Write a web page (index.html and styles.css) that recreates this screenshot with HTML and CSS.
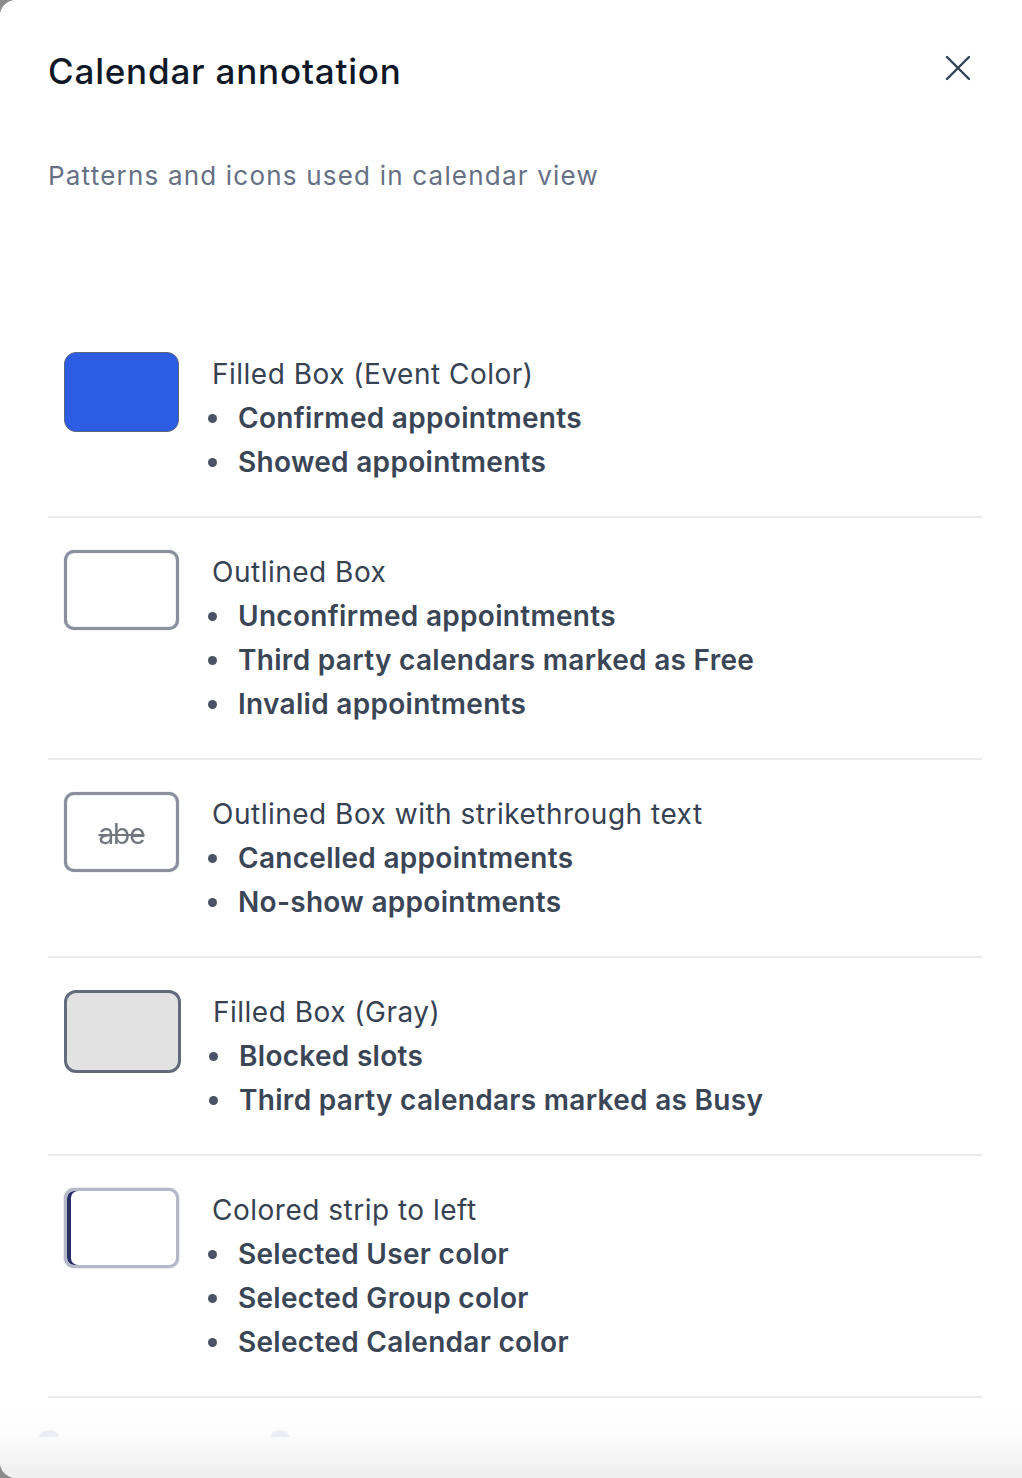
FILE: index.html
```html
<!DOCTYPE html>
<html lang="en">
<head>
<meta charset="utf-8">
<title>Calendar annotation</title>
<link rel="stylesheet" href="styles.css">
</head>
<body>
<div class="panel">
  <div class="scroll">
    <header class="header">
      <h1 class="title">Calendar annotation</h1>
      <button class="close" aria-label="Close">
        <svg width="26" height="26" viewBox="0 0 26 26" fill="none" stroke="#344054" stroke-width="2.4" stroke-linecap="round"><path d="M2 2L24 24M24 2L2 24"/></svg>
      </button>
    </header>
    <p class="subtitle">Patterns and icons used in calendar view</p>

    <div class="legend">
      <div class="row">
        <div class="swatch swatch-event"></div>
        <div class="info">
          <div class="label">Filled Box (Event Color)</div>
          <ul class="items">
            <li>Confirmed appointments</li>
            <li>Showed appointments</li>
          </ul>
        </div>
      </div>
      <div class="row">
        <div class="swatch swatch-outline"></div>
        <div class="info">
          <div class="label">Outlined Box</div>
          <ul class="items">
            <li>Unconfirmed appointments</li>
            <li>Third party calendars marked as Free</li>
            <li>Invalid appointments</li>
          </ul>
        </div>
      </div>
      <div class="row">
        <div class="swatch swatch-outline swatch-strike"><span>abe</span></div>
        <div class="info">
          <div class="label">Outlined Box with strikethrough text</div>
          <ul class="items">
            <li>Cancelled appointments</li>
            <li>No-show appointments</li>
          </ul>
        </div>
      </div>
      <div class="row">
        <div class="swatch swatch-gray"></div>
        <div class="info">
          <div class="label">Filled Box (Gray)</div>
          <ul class="items">
            <li>Blocked slots</li>
            <li>Third party calendars marked as Busy</li>
          </ul>
        </div>
      </div>
      <div class="row">
        <div class="swatch swatch-strip"></div>
        <div class="info">
          <div class="label">Colored strip to left</div>
          <ul class="items">
            <li>Selected User color</li>
            <li>Selected Group color</li>
            <li>Selected Calendar color</li>
          </ul>
        </div>
      </div>
      <div class="row row-icons">
        <div class="icon-dot"></div>
        <div class="icon-dot icon-dot-2"></div>
      </div>
    </div>
  </div>
  <div class="footer"></div>
</div>
</body>
</html>
```

FILE: styles.css
```css
* { box-sizing: border-box; }
html, body { margin: 0; padding: 0; }
body {
  background: #8c8c8c;
  font-family: Inter, "Noto Sans", "Liberation Sans", sans-serif;
  width: 1022px;
  height: 1478px;
  overflow: hidden;
}
.panel {
  height: 1478px;
  background: #fff;
  border-radius: 16px 0 0 16px;
  display: flex;
  flex-direction: column;
  overflow: hidden;
}
.scroll {
  flex: 1;
  overflow: hidden;
  padding: 0 40px 0 48px;
  background: linear-gradient(to bottom, #fff 0, #fff 1405px, #fcfcfc 1437px);
}
.header {
  padding-top: 48px;
  display: flex;
  justify-content: space-between;
  align-items: flex-start;
}
.title {
  margin: 0;
  font-size: 35px;
  line-height: 46px;
  font-weight: 500;
  color: #101828;
  letter-spacing: 0.8px;
}
.close {
  border: 0;
  background: none;
  padding: 0;
  margin: 7px 11px 0 0;
  width: 26px;
  height: 26px;
  cursor: pointer;
}
.close svg { display: block; }
.subtitle {
  margin: 64px 0 0 0;
  font-size: 26px;
  line-height: 36px;
  color: #667085;
  letter-spacing: 1.2px;
}
.legend {
  margin-top: 126px;
}
.row {
  display: flex;
  align-items: flex-start;
  padding: 32px 0 32px 16px;
  border-bottom: 2px solid #eaebef;
}
.swatch {
  flex: none;
  width: 115px;
  height: 80px;
  border-radius: 12px;
  margin-right: 33px;
}
.swatch-event {
  background: #2c5ce4;
  border: 1.5px solid #5d6679;
}
.swatch-outline {
  background: #fff;
  border: 3px solid #8a8f9d;
  border-radius: 10px;
  box-shadow: 0 0 1px #8a8f9d, inset 0 0 1px #8a8f9d;
}
.swatch-strike {
  display: flex;
  align-items: center;
  justify-content: center;
}
.swatch-strike span {
  font-size: 28px;
  line-height: 1;
  margin-top: 4px;
  color: #71767f;
  text-decoration: line-through;
  text-decoration-thickness: 2px;
  filter: blur(0.7px);
  letter-spacing: -1px;
}
.swatch-gray {
  width: 117px;
  height: 83px;
  margin-right: 32px;
  background: #e2e2e2;
  border: 3px solid #636a7c;
  border-radius: 12px;
}
.swatch-strip {
  background: #fff;
  border: 3px solid #b4b8c7;
  border-radius: 10px;
  box-shadow: inset 4px 0 0 #2a2f66, 0 0 1.5px #9aa0b3;
  filter: blur(0.5px);
}
.info {
  color: #364152;
}
.label {
  font-size: 28px;
  line-height: 44px;
  letter-spacing: 0.5px;
}
.items {
  list-style: none;
  margin: 0;
  padding: 0;
}
.items li {
  position: relative;
  font-size: 28px;
  line-height: 44px;
  font-weight: 600;
  padding-left: 26px;
  letter-spacing: 0.3px;
  color: #3a4556;
}
.items li::before {
  content: "";
  position: absolute;
  left: -4px;
  top: 18px;
  width: 9px;
  height: 9px;
  border-radius: 50%;
  background: #4a5365;
}
.row-icons {
  border-bottom: 0;
  padding: 32px 0 0 0;
  height: 80px;
}
.icon-dot {
  width: 22px;
  height: 22px;
  border-radius: 50%;
  background: #eceef3;
  margin-left: -10px;
}
.icon-dot-2 {
  margin-left: 209px;
}
.footer {
  flex: none;
  height: 41px;
  background: linear-gradient(to bottom, #fbfbfb, #eeeeee);
}
```
